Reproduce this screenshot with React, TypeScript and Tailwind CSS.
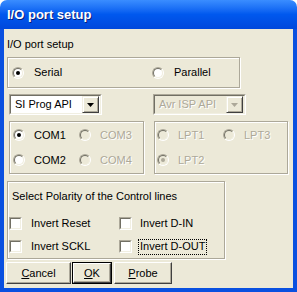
import React from 'react'

const font = { fontFamily: '"Liberation Sans", Arial, sans-serif' }

function Radio({ checked = false, disabled = false }: { checked?: boolean; disabled?: boolean }) {
  return (
    <span className="flex h-[12px] w-[12px] shrink-0 rounded-full border border-t-[#ACA899] border-l-[#ACA899] border-r-white border-b-white">
      <span
        className={`flex h-full w-full items-center justify-center rounded-full border border-t-[#716F64] border-l-[#716F64] border-r-[#F1EFE2] border-b-[#F1EFE2] ${
          disabled ? 'bg-[#ECE9D8]' : 'bg-white'
        }`}
      >
        {checked && <span className={`h-[4px] w-[4px] rounded-full ${disabled ? 'bg-[#ACA899]' : 'bg-black'}`} />}
      </span>
    </span>
  )
}

function Check() {
  return (
    <span className="flex h-[13px] w-[13px] shrink-0 border border-t-[#ACA899] border-l-[#ACA899] border-r-white border-b-white">
      <span className="h-full w-full border border-t-[#716F64] border-l-[#716F64] border-r-[#F1EFE2] border-b-[#F1EFE2] bg-white" />
    </span>
  )
}

function Label({ children, disabled = false }: { children: React.ReactNode; disabled?: boolean }) {
  return (
    <span
      className={`text-[11px] leading-[13px] whitespace-nowrap ${
        disabled ? 'text-[#ACA899] [text-shadow:1px_1px_0_#fff]' : 'text-black'
      }`}
    >
      {children}
    </span>
  )
}

function Group({ className = '', children }: { className?: string; children: React.ReactNode }) {
  return (
    <div className={`border border-[#ACA899] shadow-[inset_1px_1px_0_#fff,1px_1px_0_#fff] ${className}`}>
      {children}
    </div>
  )
}

function Combo({ text, disabled = false }: { text: string; disabled?: boolean }) {
  return (
    <div className="flex h-[21px] w-[93px] border border-t-[#ACA899] border-l-[#ACA899] border-r-white border-b-white">
      <div
        className={`flex flex-1 items-center border border-t-[#716F64] border-l-[#716F64] border-r-[#F1EFE2] border-b-[#F1EFE2] p-[1px] ${
          disabled ? 'bg-[#ECE9D8]' : 'bg-white'
        }`}
      >
        <div className="flex flex-1 items-center pl-[3px]">
          <Label disabled={disabled}>{text}</Label>
        </div>
        <div className="flex h-[17px] w-[17px] items-center justify-center border border-t-[#F1EFE2] border-l-[#F1EFE2] border-r-[#404040] border-b-[#404040] bg-[#ECE9D8] shadow-[inset_1px_1px_0_#fff,inset_-1px_-1px_0_#ACA899]">
          <svg width="7" height="4" viewBox="0 0 7 4">
            <path d="M0 0h7L3.5 4z" fill={disabled ? '#ACA899' : '#000'} />
          </svg>
        </div>
      </div>
    </div>
  )
}

function Button({ children, w, def = false }: { children: React.ReactNode; w: string; def?: boolean }) {
  const inner = (
    <div className="flex h-full w-full items-center justify-center border border-t-white border-l-white border-r-[#404040] border-b-[#404040] bg-[#ECE9D8] shadow-[inset_-1px_-1px_0_#ACA899]">
      <Label>{children}</Label>
    </div>
  )
  return def ? (
    <div className={`h-[22px] ${w} border border-black`}>{inner}</div>
  ) : (
    <div className={`h-[22px] ${w}`}>{inner}</div>
  )
}

export default function App() {
  return (
    <div className="flex h-[292px] w-[297px] flex-col overflow-hidden bg-white text-[11px] leading-[13px]" style={font}>
      <div className="flex h-[29px] shrink-0 items-center rounded-t-[7px] bg-gradient-to-b from-[#3A8DFF] via-[#0058EE] to-[#0048DC] pl-[7px]">
        <span className="text-[13px] font-bold leading-none text-white [text-shadow:1px_1px_0_#0A1E7A]">I/O port setup</span>
      </div>
      <div className="flex flex-1 flex-col border-x-4 border-b-4 border-[#0A50E0] bg-[#ECE9D8]">
        <div className="mt-[9px] ml-[3px] flex h-[13px] items-center">
          <Label>I/O port setup</Label>
        </div>

        <Group className="mt-[6px] ml-[3px] flex h-[31px] w-[233px] items-center">
          <div className="ml-[4px] flex w-[140px] items-center gap-[10px]">
            <Radio checked />
            <Label>Serial</Label>
          </div>
          <div className="flex items-center gap-[10px]">
            <Radio />
            <Label>Parallel</Label>
          </div>
        </Group>

        <div className="mt-[6px] ml-[5px] flex gap-[51px]">
          <Combo text="SI Prog API" />
          <Combo text="Avr ISP API" disabled />
        </div>

        <div className="mt-[6px] ml-[5px] flex gap-[10px]">
          <Group className="grid h-[53px] w-[135px] grid-cols-[66px_1fr] content-center gap-y-[12px] pl-[3px]">
            <div className="flex items-center gap-[9px]">
              <Radio checked />
              <Label>COM1</Label>
            </div>
            <div className="flex items-center gap-[9px]">
              <Radio disabled />
              <Label disabled>COM3</Label>
            </div>
            <div className="flex items-center gap-[9px]">
              <Radio />
              <Label>COM2</Label>
            </div>
            <div className="flex items-center gap-[9px]">
              <Radio disabled />
              <Label disabled>COM4</Label>
            </div>
          </Group>
          <Group className="grid h-[53px] w-[134px] grid-cols-[66px_1fr] content-center gap-y-[12px] pl-[2px]">
            <div className="flex items-center gap-[9px]">
              <Radio disabled />
              <Label disabled>LPT1</Label>
            </div>
            <div className="flex items-center gap-[9px]">
              <Radio disabled />
              <Label disabled>LPT3</Label>
            </div>
            <div className="flex items-center gap-[9px]">
              <Radio checked disabled />
              <Label disabled>LPT2</Label>
            </div>
          </Group>
        </div>

        <Group className="mt-[7px] ml-[3px] flex h-[78px] w-[218px] flex-col">
          <div className="mt-[8px] ml-[4px] flex h-[13px] items-center">
            <Label>Select Polarity of the Control lines</Label>
          </div>
          <div className="mt-[14px] ml-[1px] grid grid-cols-[110px_1fr] gap-y-[10px]">
            <div className="flex h-[13px] items-center gap-[9px]">
              <Check />
              <Label>Invert Reset</Label>
            </div>
            <div className="flex h-[13px] items-center gap-[6px]">
              <Check />
              <span className="flex h-[16px] items-center border border-transparent px-[1px]">
                <Label>Invert D-IN</Label>
              </span>
            </div>
            <div className="flex h-[13px] items-center gap-[9px]">
              <Check />
              <Label>Invert SCKL</Label>
            </div>
            <div className="flex h-[13px] items-center gap-[6px]">
              <Check />
              <span className="flex h-[16px] items-center border border-dotted border-black px-[1px]">
                <Label>Invert D-OUT</Label>
              </span>
            </div>
          </div>
        </Group>

        <div className="mt-[3px] ml-[2px] flex items-center gap-[1px]">
          <Button w="w-[65px]">
            <span className="underline">C</span>ancel
          </Button>
          <Button w="w-[40px]" def>
            <span className="underline">O</span>K
          </Button>
          <div className="ml-[1px]">
            <Button w="w-[58px]">
              <span className="underline">P</span>robe
            </Button>
          </div>
        </div>
      </div>
    </div>
  )
}
